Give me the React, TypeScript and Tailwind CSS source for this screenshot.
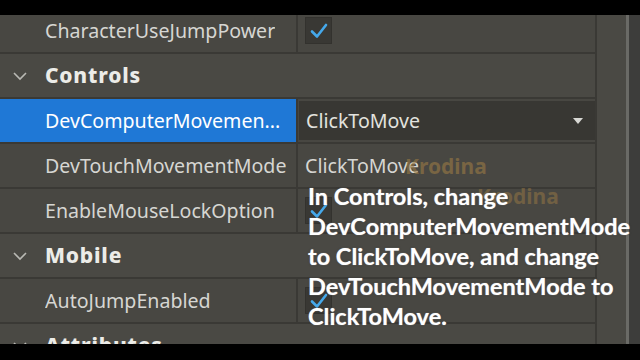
import React from "react";

const Chevron = () => (
  <svg width="16" height="10" viewBox="0 0 16 10" className="shrink-0">
    <path d="M2 2 L8 8 L14 2" fill="none" stroke="#b9b9b4" strokeWidth="1.6" />
  </svg>
);

const Check = () => (
  <div className="w-[27px] h-[27px] bg-[#393834] border border-[#33322e] flex items-center justify-center">
    <svg width="20" height="18" viewBox="0 0 20 18">
      <path d="M3 9.5 L8 14.5 L17 3" fill="none" stroke="#45a8ea" strokeWidth="2.6" strokeLinecap="round" strokeLinejoin="round" />
    </svg>
  </div>
);

const font = { fontFamily: '"Noto Sans", "Open Sans", sans-serif' };

function PropRow({ name, children, selected }: { name: string; children?: React.ReactNode; selected?: boolean }) {
  return (
    <div className="h-[45px] flex border-b-2 border-[#3a3935] shrink-0">
      <div
        className={`w-[298px] shrink-0 flex items-center pl-[45px] pr-[2px] border-r-2 border-[#3a3935] text-[19.6px] ${
          selected ? "bg-[#1f78d6] text-white" : "text-[#d6d6d2]"
        }`}
      >
        <span className="whitespace-nowrap overflow-hidden">{name}</span>
      </div>
      <div className="flex-1 flex items-center">{children}</div>
    </div>
  );
}

function Header({ name }: { name: string }) {
  return (
    <div className="h-[45px] flex items-center border-b-2 border-[#3a3935] bg-[#4a4944] shrink-0">
      <div className="w-[45px] flex justify-center pl-[4px]">
        <div className="mr-[10px]">
          <Chevron />
        </div>
      </div>
      <span className="text-[21px] font-extrabold tracking-[0.8px] text-[#ecece8]">{name}</span>
    </div>
  );
}

export default function App() {
  return (
    <div className="w-[640px] h-[360px] bg-black flex flex-col overflow-hidden" style={font}>
      <div className="h-[15px] shrink-0 bg-black" />
      <div className="h-[329px] shrink-0 relative flex overflow-hidden bg-[#484742]">
        <div className="w-[597px] shrink-0 flex flex-col mt-[-6px] border-r-2 border-[#3a3935]">
          <PropRow name="CharacterUseJumpPower">
            <div className="pl-[7px]">
              <Check />
            </div>
          </PropRow>
          <Header name="Controls" />
          <PropRow name="DevComputerMovemen..." selected>
            <div className="flex-1 self-stretch my-[2px] ml-[1px] bg-[#383733] flex items-center justify-between pl-[7px] pr-[12px] text-[19.6px] text-[#e2e2de]">
              <span>ClickToMove</span>
              <svg width="10" height="6" viewBox="0 0 10 6">
                <path d="M0 0 L10 0 L5 6 Z" fill="#d8d8d4" />
              </svg>
            </div>
          </PropRow>
          <PropRow name="DevTouchMovementMode">
            <span className="pl-[7px] text-[19.6px] text-[#d6d6d2]">ClickToMove</span>
          </PropRow>
          <PropRow name="EnableMouseLockOption">
            <div className="pl-[7px]">
              <Check />
            </div>
          </PropRow>
          <Header name="Mobile" />
          <PropRow name="AutoJumpEnabled">
            <div className="pl-[7px]">
              <Check />
            </div>
          </PropRow>
          <Header name="Attributes" />
        </div>
        <div className="w-[29px] shrink-0 bg-[#4a4944]" />
        <div className="w-[3px] shrink-0 bg-[#6a6a66]" />
        <div className="flex-1 bg-[#3d3d3b]" />

        <div className="absolute left-[405px] top-[141px] text-[21px] font-bold text-[#9a7a45] opacity-60 leading-none">Krodina</div>
        <div className="absolute left-[477px] top-[171px] text-[21px] font-bold text-[#9a7a45] opacity-50 leading-none">Krodina</div>

        <div
          className="absolute left-[308px] top-[166px] text-[23.5px] font-bold leading-[30px] text-white whitespace-nowrap"
          style={{ fontFamily: 'Lato, "Open Sans", sans-serif', textShadow: "0 0 2px rgba(0,0,0,0.5), 0 0 1px #fff" }}
        >
          <div>In Controls, change</div>
          <div>DevComputerMovementMode</div>
          <div>to ClickToMove, and change</div>
          <div>DevTouchMovementMode to</div>
          <div>ClickToMove.</div>
        </div>
      </div>
      <div className="flex-1 bg-black" />
    </div>
  );
}
